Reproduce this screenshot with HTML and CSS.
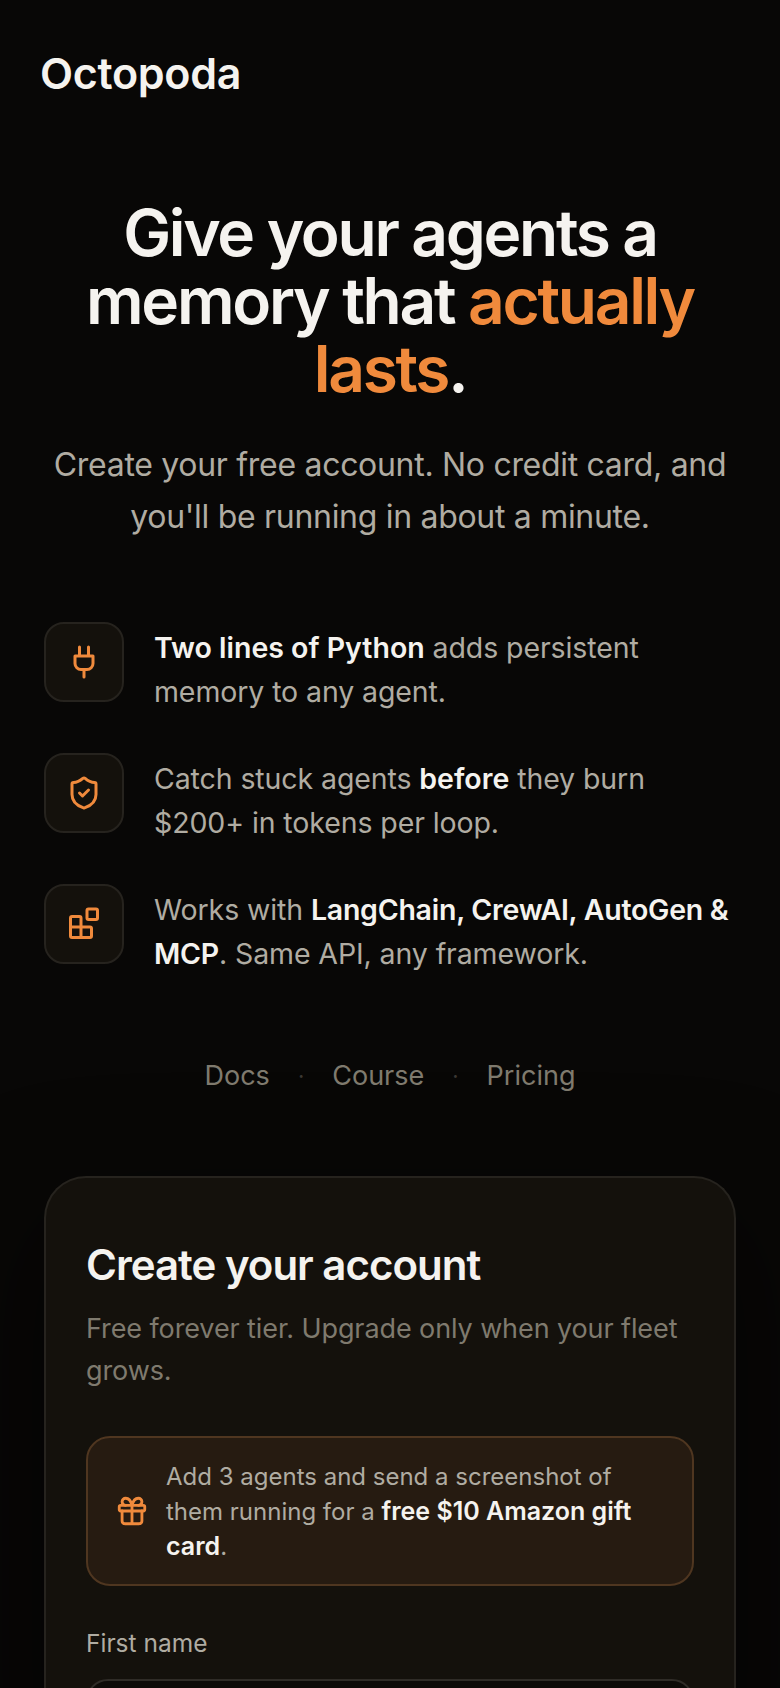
FILE: index.html
```html
<!DOCTYPE html>
<html lang="en">
<head>
<meta charset="utf-8">
<title>Octopoda</title>
<link rel="stylesheet" href="styles.css">
</head>
<body>
<main class="page">
  <div class="logo">Octopoda</div>
  <section class="hero">
    <h1>Give your agents a memory that <em>actually lasts</em>.</h1>
    <p>Create your free account. No credit card, and you'll be running in about a minute.</p>
  </section>
  <ul class="features">
    <li class="feature">
      <span class="icon-box"><svg class="icon" viewBox="0 0 24 24"><path d="M12 22v-5M9 8V2M15 8V2M18 8v5a4 4 0 0 1-4 4h-4a4 4 0 0 1-4-4V8Z"/></svg></span>
      <p><strong>Two lines of Python</strong> adds persistent memory to any agent.</p>
    </li>
    <li class="feature">
      <span class="icon-box"><svg class="icon" viewBox="0 0 24 24"><path d="M20 13c0 5-3.5 7.5-7.66 8.95a1 1 0 0 1-.67-.01C7.5 20.5 4 18 4 13V6a1 1 0 0 1 1-1c2 0 4.500-1.200 6.240-2.720a1.170 1.170 0 0 1 1.520 0C14.510 3.810 17 5 19 5a1 1 0 0 1 1 1z"/><path d="m9 12 2 2 4-4"/></svg></span>
      <p>Catch stuck agents <strong>before</strong> they burn $200+ in tokens per loop.</p>
    </li>
    <li class="feature">
      <span class="icon-box"><svg class="icon" viewBox="0 0 24 24"><rect x="14" y="2" width="7" height="7" rx="1"/><path d="M10 21V8a1 1 0 0 0-1-1H4a1 1 0 0 0-1 1v12a1 1 0 0 0 1 1h12a1 1 0 0 0 1-1v-5a1 1 0 0 0-1-1H3"/></svg></span>
      <p class="wide">Works with <strong class="tight">LangChain, CrewAI, AutoGen &amp; MCP</strong>. Same API, any framework.</p>
    </li>
  </ul>
  <nav class="links">
    <a>Docs</a><span class="dot">·</span><a>Course</a><span class="dot">·</span><a>Pricing</a>
  </nav>
  <section class="card">
    <h2>Create your account</h2>
    <p class="sub">Free forever tier. Upgrade only when your fleet grows.</p>
    <div class="notice">
      <svg class="gift" viewBox="0 0 24 24"><rect x="3" y="8" width="18" height="4" rx="1"/><path d="M12 8v13M19 12v7a2 2 0 0 1-2 2H7a2 2 0 0 1-2-2v-7M7.500 8a2.500 2.500 0 0 1 0-5A4.800 8 0 0 1 12 8a4.800 8 0 0 1 4.500-5 2.500 2.500 0 0 1 0 5"/></svg>
      <p>Add 3 agents and send a screenshot of them running for a <strong>free $10 Amazon gift card</strong>.</p>
    </div>
    <label class="label">First name</label>
    <div class="input"></div>
  </section>
</main>
</body>
</html>
```
FILE: styles.css
```css
* { box-sizing: border-box; }
html, body { margin: 0; padding: 0; }
body {
  background: #080706;
  color: #f5f3ef;
  font-family: Inter, "Liberation Sans", sans-serif;
  height: 1688px;
  overflow: hidden;
}
.page { padding: 44px 44px 0; }
.logo { margin-left: -4px; font-size: 43px; line-height: 58px; font-weight: 600; letter-spacing: -0.3px; }
.hero { margin-top: 97px; text-align: center; }
h1 { margin: 0 -10px; font-size: 64px; line-height: 68px; font-weight: 600; letter-spacing: -2.3px; }
h1 em { font-style: normal; color: #f08a3c; }
.hero p { margin: 36px 0 0; font-size: 32px; line-height: 52px; color: #b0aca2; letter-spacing: -0.3px; }
.features { list-style: none; margin: 79px 0 0; padding: 0; display: flex; flex-direction: column; gap: 39px; }
.feature { display: flex; gap: 30px; align-items: flex-start; }
.feature p { margin: 0; padding-top: 4px; font-size: 28.5px; line-height: 44px; color: #b0aca2; letter-spacing: -0.1px; }
.feature p.wide { margin-right: -8px; }
.feature strong { color: #f5f3ef; font-weight: 600; letter-spacing: 0; }
.feature strong.tight { letter-spacing: -0.25px; }
.icon-box { flex: none; width: 80px; height: 80px; border: 2px solid #26231e; border-radius: 20px; background: #14110c; display: flex; align-items: center; justify-content: center; }
.icon { width: 36px; height: 36px; fill: none; stroke: #f08a3c; stroke-width: 2; stroke-linecap: round; stroke-linejoin: round; }
.links { margin-top: 80px; display: flex; justify-content: center; align-items: center; gap: 28px; font-size: 27px; line-height: 40px; color: #7f7a6e; }
.dot { color: #3a3733; font-size: 22px; }
.card { margin-top: 80px; height: 600px; border: 2px solid #26231e; border-bottom: 0; border-radius: 42px; background: #14110c; padding: 61px 40px 0; box-shadow: 0 40px 120px rgba(0,0,0,.6); }
h2 { margin: 0; font-size: 42px; line-height: 52px; font-weight: 600; letter-spacing: -1px; }
.sub { margin: 17px 0 0; font-size: 27px; line-height: 42px; color: #7f7a6e; letter-spacing: -0.1px; }
.notice { margin-top: 44px; height: 150px; display: flex; align-items: center; gap: 17px; padding: 0 27px; background: #261b11; border: 2px solid #4f3620; border-radius: 24px; }
.gift { flex: none; width: 34px; height: 34px; fill: none; stroke: #f08a3c; stroke-width: 2; stroke-linecap: round; stroke-linejoin: round; }
.notice p { margin: 0; font-size: 24px; line-height: 35px; color: #b0aca2; }
.notice strong { color: #f5f3ef; font-size: 25px; font-weight: 600; }
.label { display: block; margin-top: 40px; font-size: 24.5px; line-height: 34px; color: #b0aca2; font-weight: 400; }
.input { margin-top: 19px; height: 80px; background: #0d0b08; border: 2px solid #2f2c27; border-radius: 22px; }
```
